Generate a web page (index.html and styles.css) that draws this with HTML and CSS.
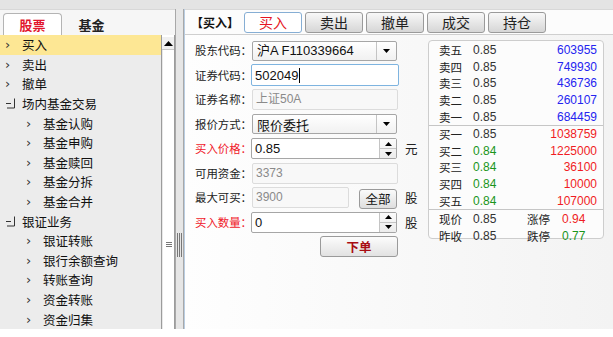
FILE: index.html
```html
<!DOCTYPE html>
<html>
<head>
<meta charset="utf-8">
<link rel="stylesheet" href="styles.css">
</head>
<body>
<div class="app">
  <div class="topstrip"></div>
  <div class="main">
    <div class="left">
      <div class="tabbar">
        <div class="tab active">股票</div>
        <div class="tab">基金</div>
      </div>
      <div class="treewrap">
        <ul class="tree">
          <li class="row sel"><span class="chev">›</span>买入</li>
          <li class="row"><span class="chev">›</span>卖出</li>
          <li class="row"><span class="chev">›</span>撤单</li>
          <li class="row"><span class="box"><svg width="11" height="11" viewBox="0 0 11 11"><path d="M1 5.5h5M9.5 0.5v9.5H2" fill="none" stroke="#333" stroke-width="1"/></svg></span>场内基金交易</li>
          <li class="row child"><span class="chev">›</span>基金认购</li>
          <li class="row child"><span class="chev">›</span>基金申购</li>
          <li class="row child"><span class="chev">›</span>基金赎回</li>
          <li class="row child"><span class="chev">›</span>基金分拆</li>
          <li class="row child"><span class="chev">›</span>基金合并</li>
          <li class="row"><span class="box"><svg width="11" height="11" viewBox="0 0 11 11"><path d="M1 5.5h5M9.5 0.5v9.5H2" fill="none" stroke="#333" stroke-width="1"/></svg></span>银证业务</li>
          <li class="row child"><span class="chev">›</span>银证转账</li>
          <li class="row child"><span class="chev">›</span>银行余额查询</li>
          <li class="row child"><span class="chev">›</span>转账查询</li>
          <li class="row child"><span class="chev">›</span>资金转账</li>
          <li class="row child"><span class="chev">›</span>资金归集</li>
        </ul>
        <div class="vscroll">
          <div class="sbtn"><svg width="9" height="5" viewBox="0 0 9 5"><path d="M0 5L4.5 0L9 5Z" fill="#000"/></svg></div>
          <div class="strack"><div class="sgrip"></div></div>
        </div>
      </div>
    </div>
    <div class="splitter"><div class="sgrip2"></div></div>
    <div class="right">
      <div class="toolbar">
        <span class="title">【买入】</span>
        <div class="tbtn active">买入</div>
        <div class="tbtn">卖出</div>
        <div class="tbtn">撤单</div>
        <div class="tbtn">成交</div>
        <div class="tbtn">持仓</div>
      </div>
      <div class="content">
        <div class="form">
          <div class="frow"><span class="lbl">股东代码：</span>
            <div class="select"><span class="sv">沪A F110339664</span><span class="sarrow"><svg width="7" height="4" viewBox="0 0 7 4"><path d="M0 0H7L3.5 4Z" fill="#000"/></svg></span></div>
          </div>
          <div class="frow"><span class="lbl">证券代码：</span>
            <div class="input focus">502049<span class="caret"></span></div>
          </div>
          <div class="frow"><span class="lbl">证券名称：</span>
            <div class="ro">上证50A</div>
          </div>
          <div class="frow"><span class="lbl">报价方式：</span>
            <div class="select"><span class="sv cn">限价委托</span><span class="sarrow"><svg width="7" height="4" viewBox="0 0 7 4"><path d="M0 0H7L3.5 4Z" fill="#000"/></svg></span></div>
          </div>
          <div class="frow"><span class="lbl red">买入价格：</span>
            <div class="spin"><span class="sv">0.85</span><span class="spbtns"><span class="up"><svg width="7" height="4" viewBox="0 0 7 4"><path d="M0 4H7L3.5 0Z" fill="#000"/></svg></span><span class="dn"><svg width="7" height="4" viewBox="0 0 7 4"><path d="M0 0H7L3.5 4Z" fill="#000"/></svg></span></span></div>
            <span class="unit">元</span>
          </div>
          <div class="frow"><span class="lbl">可用资金：</span>
            <div class="ro">3373</div>
          </div>
          <div class="frow"><span class="lbl">最大可买：</span>
            <div class="ro short">3900</div>
            <div class="allbtn">全部</div>
            <span class="unit">股</span>
          </div>
          <div class="frow"><span class="lbl red">买入数量：</span>
            <div class="spin"><span class="sv">0</span><span class="spbtns"><span class="up"><svg width="7" height="4" viewBox="0 0 7 4"><path d="M0 4H7L3.5 0Z" fill="#000"/></svg></span><span class="dn"><svg width="7" height="4" viewBox="0 0 7 4"><path d="M0 0H7L3.5 4Z" fill="#000"/></svg></span></span></div>
            <span class="unit">股</span>
          </div>
          <div class="frow end">
            <div class="order">下单</div>
          </div>
        </div>
        <div class="quote">
          <div class="qsec">
            <div class="qrow"><span class="ql">卖五</span><span class="qp">0.85</span><span class="qv blue">603955</span></div>
            <div class="qrow"><span class="ql">卖四</span><span class="qp">0.85</span><span class="qv blue">749930</span></div>
            <div class="qrow"><span class="ql">卖三</span><span class="qp">0.85</span><span class="qv blue">436736</span></div>
            <div class="qrow"><span class="ql">卖二</span><span class="qp">0.85</span><span class="qv blue">260107</span></div>
            <div class="qrow"><span class="ql">卖一</span><span class="qp">0.85</span><span class="qv blue">684459</span></div>
          </div>
          <div class="qsec">
            <div class="qrow"><span class="ql">买一</span><span class="qp">0.85</span><span class="qv red">1038759</span></div>
            <div class="qrow"><span class="ql">买二</span><span class="qp green">0.84</span><span class="qv red">1225000</span></div>
            <div class="qrow"><span class="ql">买三</span><span class="qp green">0.84</span><span class="qv red">36100</span></div>
            <div class="qrow"><span class="ql">买四</span><span class="qp green">0.84</span><span class="qv red">10000</span></div>
            <div class="qrow"><span class="ql">买五</span><span class="qp green">0.84</span><span class="qv red">107000</span></div>
          </div>
          <div class="qsec last">
            <div class="qrow2"><span class="ql">现价</span><span class="qp">0.85</span><span class="ql">涨停</span><span class="qp red">0.94</span></div>
            <div class="qrow2"><span class="ql">昨收</span><span class="qp">0.85</span><span class="ql">跌停</span><span class="qp green">0.77</span></div>
          </div>
        </div>
      </div>
    </div>
  </div>
</div>
</body>
</html>
```
FILE: styles.css
```css
* { box-sizing: border-box; }
body {
  margin: 0;
  background: #fff;
  font-family: "Noto Sans CJK SC", "Liberation Sans", sans-serif;
  font-size: 12px;
  line-height: 15px;
  color: #111;
}
.app { width: 613px; height: 337px; display: flex; flex-direction: column; overflow: hidden; }
.topstrip { height: 9px; background: #e4e4e4; flex: none; }
.main { height: 320px; display: flex; flex: none; }

.left { width: 175px; display: flex; flex-direction: column; flex: none; }
.tabbar {
  height: 26px; flex: none; display: flex; align-items: flex-end; padding-left: 3px;
  background: #f6f6f6; border-top: 1px solid #d8d8d8;
}
.tab {
  width: 59px; height: 22px; display: flex; align-items: center; justify-content: center;
  font-size: 13px; font-weight: bold; color: #222;
}
.tab.active {
  background: #fff; border: 1px solid #b4b4b4; border-bottom: none; border-radius: 4px 4px 0 0;
  color: #e2152d;
}
.treewrap { flex: 1; display: flex; min-height: 0; }
.tree { list-style: none; margin: 0; padding: 0; width: 161px; background: #ececec; height: 294px; }
.row { height: 19.6px; display: flex; align-items: center; padding-left: 5px; font-size: 12.5px; color: #111; white-space: nowrap; }
.row.child { padding-left: 26px; }
.row.sel { background: #fde794; }
.chev { width: 17px; font-family: "DejaVu Sans", sans-serif; font-size: 13px; color: #333; line-height: 1; }
.box { width: 17px; display: flex; align-items: center; }
.vscroll { width: 14px; display: flex; flex-direction: column; border-left: 1px solid #9c9c9c; border-right: 1px solid #9c9c9c; background: #fff; }
.sbtn { height: 13px; margin-top: 2px; display: flex; align-items: center; justify-content: center; background: #f0f0f0; border-bottom: 1px solid #c8c8c8; }
.strack { flex: 1; display: flex; justify-content: center; padding-top: 192px; border-left: 1px solid #e8e8e8; }
.sgrip { width: 6px; height: 6px; background: repeating-linear-gradient(to bottom, #777 0 1px, transparent 1px 2px); }

.splitter { width: 9px; flex: none; background: #e6e6e6; border-left: 1px solid #a8a8a8; border-right: 1px solid #a8a8a8; display: flex; justify-content: center; padding-top: 224px; }
.sgrip2 { width: 5px; height: 24px; background: repeating-linear-gradient(to right, #777 0 1px, transparent 1px 2px); }

.right { flex: 1; display: flex; flex-direction: column; border-left: 1px solid #b9cde2; background: linear-gradient(to right, #fefefe, #f3f3f3); }
.toolbar { height: 26px; flex: none; display: flex; align-items: center; padding-left: 6px; gap: 3px; background: #fcfcfc; border-bottom: 1px solid #cfcfcf; border-top: 1px solid #d8d8d8; }
.title { font-weight: bold; font-size: 12px; width: 50px; color: #111; }
.tbtn {
  width: 58px; height: 21px; display: flex; align-items: center; justify-content: center;
  font-size: 14px; color: #222; border: 1px solid #9a9a9a; border-radius: 3px;
  background: linear-gradient(#f8f8f8, #d6d6d6);
}
.tbtn.active { background: #fff; border-color: #86aed4; color: #e51523; }

.content { flex: 1; display: flex; padding-top: 5px; }
.form { width: 240px; padding-left: 10px; display: flex; flex-direction: column; gap: 3.5px; }
.frow { height: 21px; display: flex; align-items: center; }
.frow.end { justify-content: flex-start; padding-left: 125px; }
.lbl { width: 57px; font-size: 11.4px; color: #222; white-space: nowrap; overflow: hidden; }
.lbl.red { color: #f0202a; }
.select {
  width: 145px; height: 20px; display: flex; align-items: center; border: 1px solid #a6a6a6; border-radius: 2px;
  background: linear-gradient(#fff, #f1f1f1);
}
.sv { flex: 1; padding-left: 4px; font-family: "Liberation Sans", "Noto Sans CJK SC", sans-serif; font-size: 13px; color: #111; }
.sv.cn { font-family: "Noto Sans CJK SC", sans-serif; }
.sarrow { width: 20px; height: 100%; border-left: 1px solid #c4c4c4; display: flex; align-items: center; justify-content: center; }
.input {
  width: 148px; height: 22px; margin-left: -1px; border: 1px solid #7eb4e0; background: #fff; border-radius: 2px;
  display: flex; align-items: center; padding-left: 3px; font-family: "Liberation Sans", sans-serif; font-size: 13px;
}
.caret { width: 1px; height: 15px; background: #000; margin-left: 1px; }
.ro {
  width: 146px; height: 21px; border: 1px solid #dcdcdc; background: #f8f8f8; border-radius: 2px;
  display: flex; align-items: center; padding-left: 3px; font-family: "Liberation Sans", "Noto Sans CJK SC", sans-serif;
  font-size: 12px; color: #8a8a8a;
}
.ro.short { width: 97px; }
.allbtn {
  width: 38px; height: 20px; margin-left: 10px; margin-top: 2px; border: 1px solid #9a9a9a; border-radius: 3px;
  background: linear-gradient(#fafafa, #dedede); display: flex; align-items: center; justify-content: center; font-size: 12.5px;
}
.unit { margin-left: 8px; font-size: 12.5px; color: #222; }
.spin {
  width: 146px; height: 21px; margin-left: -1px; border: 1px solid #a6a6a6; background: #fff; border-radius: 2px; display: flex;
}
.spin .sv { display: flex; align-items: center; padding-left: 3px; }
.spbtns { width: 17px; border-left: 1px solid #c4c4c4; display: flex; flex-direction: column; background: linear-gradient(#fbfbfb, #ececec); }
.spbtns span { flex: 1; display: flex; align-items: center; justify-content: center; }
.spbtns .up { border-bottom: 1px solid #c4c4c4; }
.order {
  width: 78px; height: 21px; border: 1px solid #9a9a9a; border-radius: 3px; background: linear-gradient(#fcfcfc, #e2e2e2);
  display: flex; align-items: center; justify-content: center; font-weight: bold; font-size: 12.5px; color: #a80d12;
}

.quote {
  width: 176px; height: 199px; margin-left: 3px; border: 1px solid #cdcdcd; border-radius: 4px;
  background: #fcfcfc; padding: 1px 0 0 0; display: flex; flex-direction: column;
}
.qsec { border-bottom: 1px solid #c6c6c6; padding: 0 0 0 10px; }
.qsec.last { border-bottom: none; padding-top: 1px; }
.qrow, .qrow2 { height: 16.6px; line-height: 14px; display: flex; align-items: center; font-size: 11.5px; }
.ql { width: 34px; color: #222; font-size: 11.5px; }
.qp { width: 40px; font-family: "Liberation Sans", sans-serif; font-size: 12px; color: #333; }
.qv { width: 84px; text-align: right; font-family: "Liberation Sans", sans-serif; font-size: 12px; }
.qrow2 .qp:nth-child(2) { width: 54px; }
.qrow2 .ql:nth-child(3) { width: 35px; }
.blue { color: #2424f0; }
.red { color: #f01c24; }
.green { color: #1a951a; }
```
